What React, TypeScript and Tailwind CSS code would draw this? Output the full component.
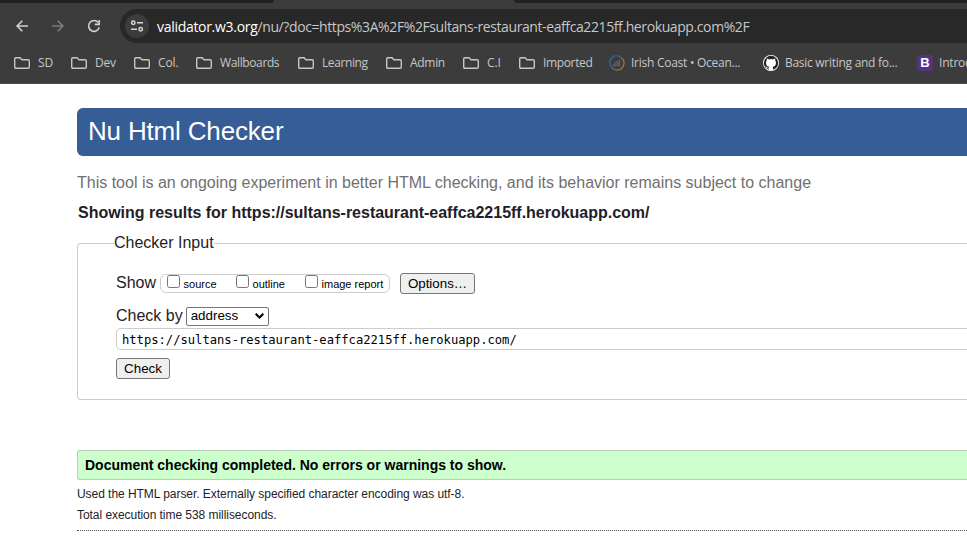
import type { ReactNode } from "react";

function Folder() {
  return (
    <svg width="16" height="14" viewBox="0 0 16 14" fill="none" stroke="#c7c7c7" strokeWidth="1.4" className="shrink-0">
      <path d="M1.900 1.700h4.200l1.900 2h6.100q1.200 0 1.200 1.200v6.200q0 1.200-1.200 1.200H1.900q-1.200 0-1.200-1.200V2.900q0-1.200 1.200-1.200z" />
    </svg>
  );
}

function Wave() {
  return (
    <svg width="16" height="16" viewBox="0 0 16 16" fill="none" className="shrink-0">
      <path d="M2.500 12.300A6.900 6.900 0 0 1 12.300 2.600" stroke="#2f6fa3" strokeWidth="1.2" />
      <path d="M12.300 2.600A6.900 6.900 0 0 1 7.200 14.900" stroke="#b9772b" strokeWidth="1.2" />
      <path d="M7.200 14.900A6.900 6.900 0 0 1 2.500 12.300" stroke="#3b7cab" strokeWidth="1.2" />
      <path d="M4.500 11.500V9M6.500 11.500V7M8.500 11.500V6M10.500 11.500V4.800" stroke="#5a6268" strokeWidth="1.500" />
    </svg>
  );
}

function GitHub() {
  return (
    <svg width="16" height="16" viewBox="0 0 16 16" className="shrink-0">
      <circle cx="8" cy="8" r="8" fill="#fff" />
      <circle cx="8" cy="8" r="7.200" fill="#20252a" />
      <path
        fill="#fff"
        d="M5.900 15.600v-2.200c-2 .4-2.500-.8-2.900-1.400-.2-.4-.5-.6-.8-.8.9-.2 1.500.4 1.900 1 .5.7 1.100.7 1.800.5.100-.5.300-.8.600-1C4.400 11.400 3 10.400 3 7.700c0-.9.3-1.600.8-2.200-.1-.5-.2-1.200.1-2 .8 0 1.500.4 2.100.9a7.500 7.500 0 0 1 4 0c.6-.5 1.300-.9 2.100-.9.3.8.2 1.500.1 2 .5.600.8 1.300.8 2.200 0 2.700-1.400 3.700-3.500 4 .4.300.6.900.6 1.600v2.300z"
      />
    </svg>
  );
}

function BootstrapIcon() {
  return (
    <span className="flex h-4 w-4 shrink-0 items-center justify-center rounded-[2px] bg-[#543480] font-['Liberation_Sans',sans-serif] text-[13px] leading-4 font-bold tracking-normal text-white">
      B
    </span>
  );
}

type Mark = { label: string; width: string; tracking: string; icon?: ReactNode };

const marks: Mark[] = [
  { label: "SD", width: "w-[57px]", tracking: "tracking-[0px]" },
  { label: "Dev", width: "w-[63px]", tracking: "tracking-[-0.2px]" },
  { label: "Col.", width: "w-[62px]", tracking: "tracking-[-0.1px]" },
  { label: "Wallboards", width: "w-[102px]", tracking: "tracking-[-0.38px]" },
  { label: "Learning", width: "w-[88px]", tracking: "tracking-[-0.4px]" },
  { label: "Admin", width: "w-[77px]", tracking: "tracking-[-0.3px]" },
  { label: "C.I", width: "w-[56px]", tracking: "tracking-[-0.1px]" },
  { label: "Imported", width: "w-[90px]", tracking: "tracking-[-0.35px]" },
  { label: "Irish Coast • Ocean...", width: "w-[154px]", tracking: "tracking-[-0.26px]", icon: <Wave /> },
  { label: "Basic writing and fo...", width: "w-[154px]", tracking: "tracking-[-0.28px]", icon: <GitHub /> },
  { label: "Introduction", width: "w-[100px]", tracking: "tracking-[-0.2px]", icon: <BootstrapIcon /> },
];

function Browser() {
  return (
    <header className="h-[84px] border-b border-[#4a4a4a] bg-[#3c3c3c] font-['Open_Sans','Noto_Sans',sans-serif]">
      <div className="flex h-[3px] justify-between bg-[#3c3c3c]">
        <div className="h-[3px] w-[274px] rounded-br-[3px] bg-[#202221]" />
        <div className="h-[3px] w-[453px] rounded-bl-[3px] bg-[#202221]" />
      </div>
      <div className="flex h-[46px] items-start pt-1.5">
        <div className="flex h-[34px] w-[120px] shrink-0 items-center pl-[15px]">
          <svg width="90" height="16" viewBox="0 0 90 16" fill="none" strokeWidth="1.6">
            <path d="M13 8H2.500M7.300 2.800 2.100 8l5.200 5.200" stroke="#d0d0d0" />
            <path d="M37 8h10.500M42.700 2.800 47.900 8l-5.200 5.200" stroke="#7b7b7b" />
            <path d="M83.200 4.500A5.400 5.400 0 1 0 84.200 9.500" stroke="#d0d0d0" />
            <path d="M84.200 2v4.400H79.800" stroke="#d0d0d0" />
          </svg>
        </div>
        <div className="flex h-[34px] flex-1 items-center rounded-l-full bg-[#282828] pl-[5px]">
          <div className="flex h-6 w-6 shrink-0 items-center justify-center rounded-full bg-[#3c3c3c]">
            <svg width="14" height="14" viewBox="0 0 14 14" fill="none" stroke="#d8d8d8" strokeWidth="1.5">
              <circle cx="3.300" cy="3.800" r="1.700" />
              <path d="M7 3.800h6M1 10.200h6" />
              <circle cx="10.700" cy="10.200" r="1.700" />
            </svg>
          </div>
          <span className="ml-2 text-[14px] whitespace-nowrap tracking-[-0.4px] text-[#c7c7c7]">
            <span className="tracking-[-0.3px] text-white">validator.w3.org</span>/nu/?doc=https%3A%2F%2Fsultans-restaurant-eaffca2215ff.herokuapp.com%2F
          </span>
        </div>
      </div>
      <nav className="flex h-[28px] items-center overflow-hidden pl-3.5 text-[12px] text-[#c7c7c7]">
        {marks.map((m) => (
          <div key={m.label} className={`flex shrink-0 items-center ${m.width} ${m.icon ? "gap-1.5" : "gap-2"}`}>
            {m.icon ?? <Folder />}
            <span className={`whitespace-nowrap ${m.tracking}`}>{m.label}</span>
          </div>
        ))}
      </nav>
    </header>
  );
}

function Check({ label, className }: { label: string; className: string }) {
  return (
    <label className={`flex items-start ${className}`}>
      <input type="checkbox" className="h-[13px] w-[13px] shrink-0 appearance-none rounded-[2.5px] border border-[#767676] bg-white" />
      <span className="mt-[3px] ml-[3.5px] text-[11px] leading-[13px] whitespace-nowrap text-black">{label}</span>
    </label>
  );
}

const button = "rounded-[3px] border border-[#767676] bg-[#efefef] text-[13.333px] leading-[19px] text-black";

export default function App() {
  return (
    <div className="h-[548px] w-full overflow-hidden bg-white font-['Liberation_Sans',Arial,sans-serif] text-[#1f2126]">
      <Browser />
      <main className="pt-6 pl-[77px]">
        <h1 className="h-12 rounded-l-[6px] bg-[#365d95] pl-[11px] text-[26px] leading-[46px] tracking-[-0.17px] text-white">
          Nu Html Checker
        </h1>
        <p className="mt-[17px] text-[16px] leading-5 text-[#707070]">
          This tool is an ongoing experiment in better HTML checking, and its behavior remains subject to change
        </p>
        <h2 className="mt-2.5 pl-px text-[16px] leading-5 font-bold tracking-[-0.015px]">
          Showing results for https://sultans-restaurant-eaffca2215ff.herokuapp.com/
        </h2>
        <fieldset className="mt-2.5 h-[167px] rounded-l-[4px] border border-r-0 border-[#ccc] pl-[38px]">
          <legend className="-ml-0.5 h-[20px] text-[16px] leading-5">Checker Input</legend>
          <div className="mt-5 flex h-[21px] items-center text-[16px]">
            <span className="pb-0.5 leading-5">Show</span>
            <div className="ml-1 flex h-[19px] w-[230px] items-start rounded-[6px] border border-[#ccc] pl-1.5">
              <Check label="source" className="w-[69px]" />
              <Check label="outline" className="w-[69px]" />
              <Check label="image report" className="" />
            </div>
            <button className={`ml-2.5 h-[21px] w-[75px] ${button}`}>Options…</button>
          </div>
          <div className="mt-3 flex h-5 items-center text-[16px]">
            <span>Check by</span>
            <div className="ml-[3px] flex h-[19px] w-[83px] items-center justify-between rounded-[2px] border border-[#767676] bg-white pr-1 pl-1 text-[13.333px] text-black">
              <span>address</span>
              <svg width="9" height="6" viewBox="0 0 9 6" fill="none" stroke="#000" strokeWidth="2">
                <path d="M.7.700 4.500 4.500 8.300.700" />
              </svg>
            </div>
          </div>
          <div className="mt-0.5 flex h-[22px] items-center rounded-l-[5px] border border-r-0 border-[#ccc] pt-0.5 pl-[5px] font-['DejaVu_Sans_Mono',monospace] text-[12.15px] text-black">
            https://sultans-restaurant-eaffca2215ff.herokuapp.com/
          </div>
          <button className={`mt-2 block h-[21px] w-[54px] ${button}`}>Check</button>
        </fieldset>
        <div className="mt-[50px] h-[30px] rounded-l-[3px] border border-r-0 border-[#b9cfb9] bg-[#ccffcc] pl-[7px] text-[14px] leading-[28px] font-bold text-black">
          Document checking completed. No errors or warnings to show.
        </div>
        <p className="mt-[5px] text-[12px] leading-[18px] tracking-[-0.05px]">
          Used the HTML parser. Externally specified character encoding was utf-8.
        </p>
        <p className="mt-[3px] text-[12px] leading-[18px] tracking-[-0.05px]">Total execution time 538 milliseconds.</p>
        <div className="mt-[6px] border-t border-dotted border-[#555]" />
      </main>
    </div>
  );
}
